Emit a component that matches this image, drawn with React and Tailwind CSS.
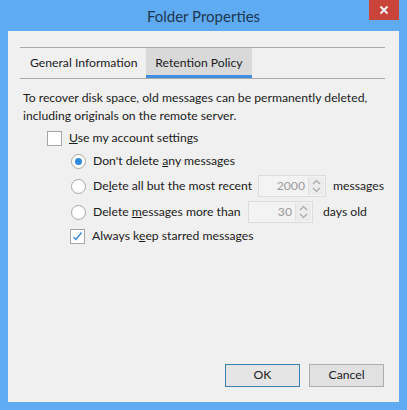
import React from "react";

const font = { fontFamily: 'Lato, "Noto Sans", sans-serif' };

function Radio({ checked }) {
  return (
    <span className="w-[15px] h-[15px] rounded-full border border-[#a6a6a6] bg-white flex items-center justify-center shrink-0">
      {checked && <span className="w-[7px] h-[7px] rounded-full bg-[#2f8ae0]" />}
    </span>
  );
}

function Spin({ value, width }) {
  return (
    <span className={`flex h-[22px] border border-[#dcdcdc] bg-[#f3f3f3] shrink-0 ${width}`}>
      <span className="flex-1 text-right pr-[3px] text-[#9a9a9a] leading-[20px]">{value}</span>
      <span className="w-[16px] flex flex-col items-center justify-center border-l border-[#e0e0e0] my-[1px] mr-[1px] bg-[#ececec]">
        <svg width="9" height="14" viewBox="0 0 9 14">
          <path d="M1 5 L4.5 1.5 L8 5" fill="none" stroke="#a8a8a8" strokeWidth="1.2" />
          <path d="M1 9 L4.5 12.5 L8 9" fill="none" stroke="#a8a8a8" strokeWidth="1.2" />
        </svg>
      </span>
    </span>
  );
}

export default function App() {
  return (
    <div className="w-[407px] h-[410px] bg-[#5fabf2] flex flex-col text-[12.2px] text-[#1b1b1b]" style={font}>
      <div className="h-[31px] relative flex items-center justify-center shrink-0">
        <span className="text-[15px] text-[#1d3650] mt-[1px]">Folder Properties</span>
        <div className="absolute right-[8px] top-0 w-[30px] h-[20px] bg-[#c9453b] flex items-center justify-center">
          <svg width="10" height="10" viewBox="0 0 10 10">
            <path d="M1.5 1.5 L8.5 8.5 M8.5 1.5 L1.5 8.5" stroke="white" strokeWidth="1.8" />
          </svg>
        </div>
      </div>
      <div className="mx-[8px] h-[371px] bg-[#f0f0f0] flex flex-col">
        <div className="mt-[16px] ml-[12px] mr-[14px] border-t border-b border-[#a9a9a9] h-[32px] flex">
          <div className="pl-[10px] flex items-center h-[30px] w-[126px] shrink-0 whitespace-nowrap">General Information</div>
          <div className="flex items-center justify-center h-[30px] w-[106px] shrink-0 whitespace-nowrap bg-[#d9d9d9] border-b-[3px] border-[#3d8ee0] pt-[3px]">Retention Policy</div>
        </div>
        <div className="pl-[15px] pt-[10px] leading-[18px] whitespace-nowrap">
          <p>To recover disk space, old messages can be permanently deleted,</p>
          <p>including originals on the remote server.</p>
        </div>
        <div className="pl-[39px] mt-[5px] flex items-center gap-[7px] h-[17px]">
          <span className="w-[15px] h-[15px] border border-[#a6a6a6] bg-white" />
          <span><u>U</u>se my account settings</span>
        </div>
        <div className="pl-[63px] mt-[4px] flex items-center gap-[7px] h-[20px]">
          <Radio checked />
          <span>Don't delete <u>a</u>ny messages</span>
        </div>
        <div className="pl-[63px] mt-[4px] flex items-center h-[22px]">
          <Radio />
          <span className="ml-[7px] w-[165px] shrink-0 whitespace-nowrap">De<u>l</u>ete all but the most recent</span>
          <Spin value="2000" width="w-[68px]" />
          <span className="ml-[7px]">messages</span>
        </div>
        <div className="pl-[63px] mt-[4px] flex items-center h-[22px]">
          <Radio />
          <span className="ml-[7px] w-[155px] shrink-0 whitespace-nowrap">Delete <u>m</u>essages more than</span>
          <Spin value="30" width="w-[65px]" />
          <span className="ml-[10px]">days old</span>
        </div>
        <div className="pl-[62px] mt-[4px] flex items-center gap-[7px] h-[18px]">
          <span className="w-[15px] h-[15px] border border-[#a6a6a6] bg-white flex items-center justify-center">
            <svg width="11" height="11" viewBox="0 0 11 11">
              <path d="M1.5 6 L4 8.5 L9.5 1.5" fill="none" stroke="#3a86d6" strokeWidth="1.4" />
            </svg>
          </span>
          <span>Always k<u>e</u>ep starred messages</span>
        </div>
        <div className="flex-1" />
        <div className="flex justify-end gap-[9px] pr-[15px] mb-[15px]">
          <button className="w-[75px] h-[23px] border border-[#3c7fb1] bg-[#e5e5e5]">OK</button>
          <button className="w-[75px] h-[23px] border border-[#adadad] bg-[#e1e1e1]">Cancel</button>
        </div>
      </div>
    </div>
  );
}
